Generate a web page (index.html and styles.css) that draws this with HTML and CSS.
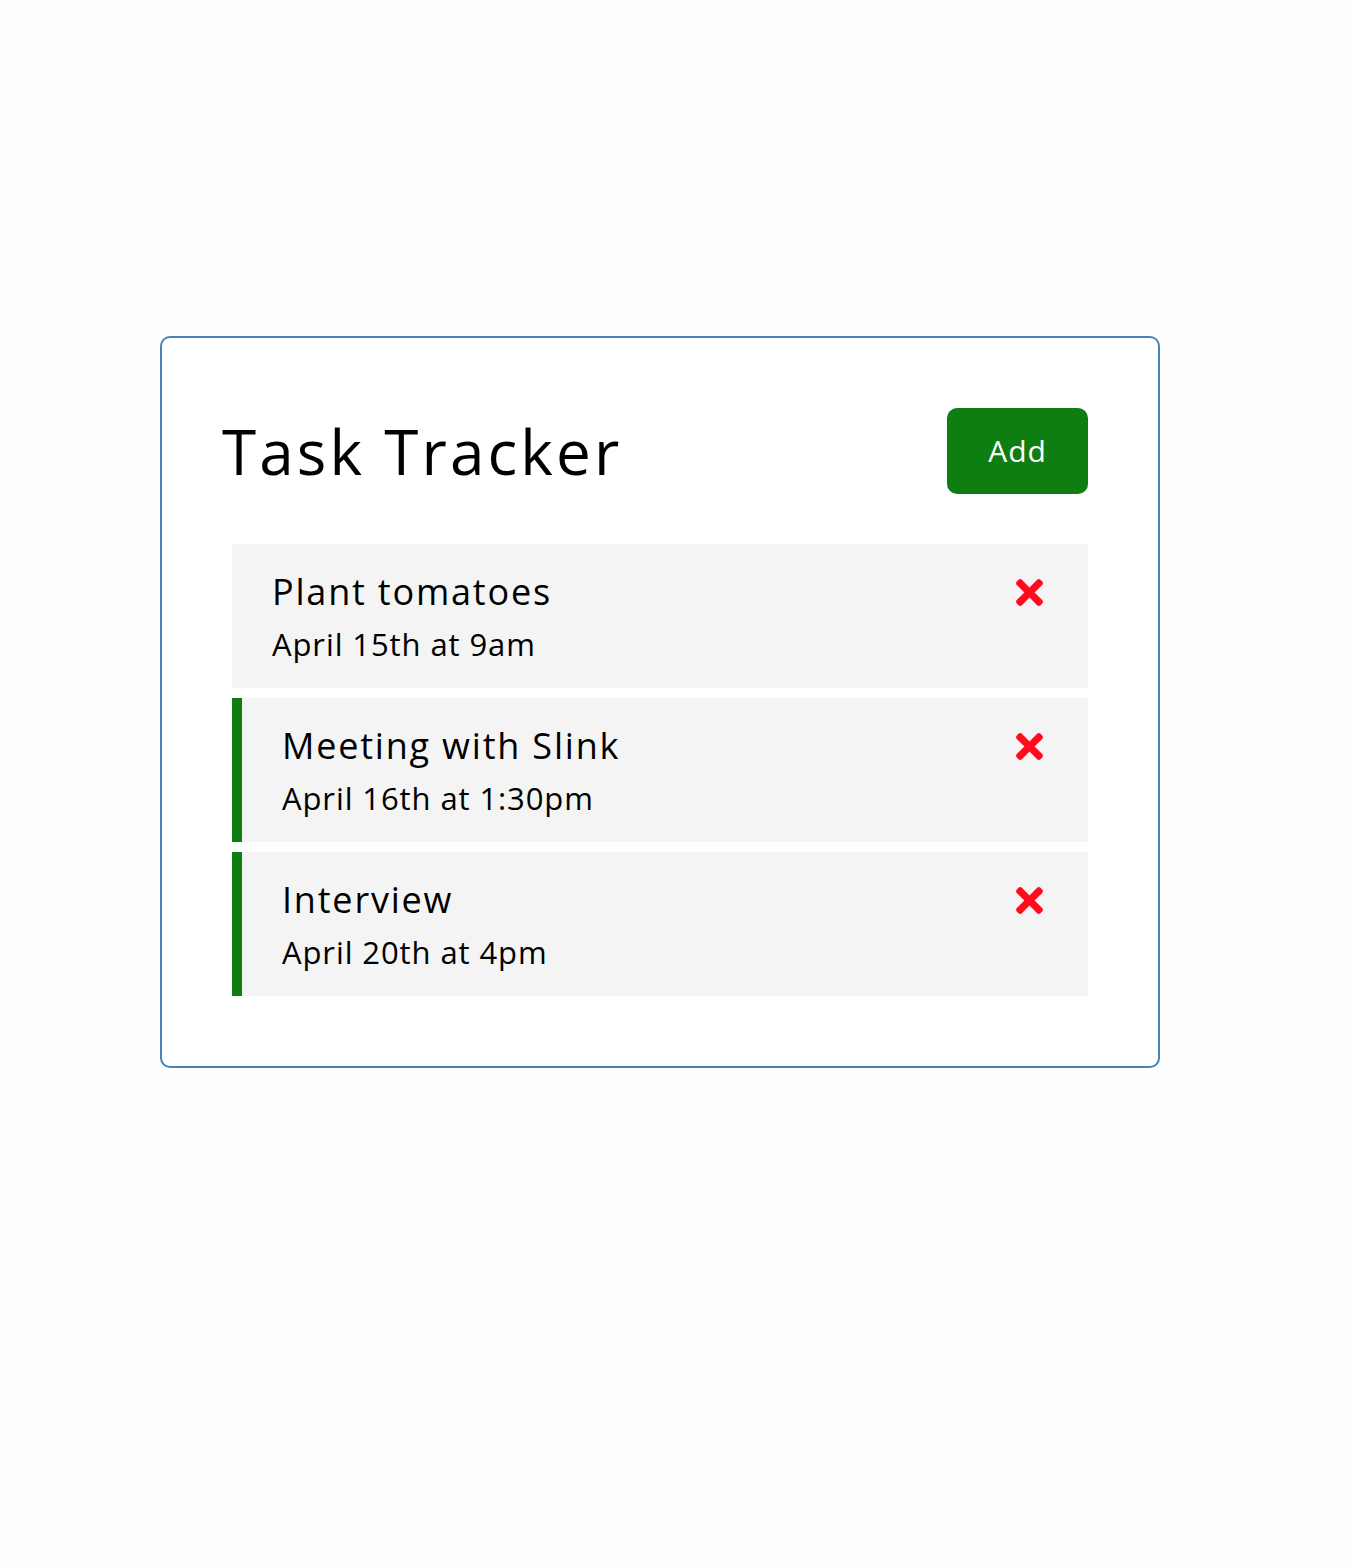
FILE: index.html
```html
<!DOCTYPE html>
<html lang="en">
<head>
<meta charset="utf-8">
<title>Task Tracker</title>
<link rel="stylesheet" href="styles.css">
</head>
<body>
<div class="container">
  <header class="header">
    <h1 class="title">Task Tracker</h1>
    <button class="btn">Add</button>
  </header>
  <div class="tasks">
    <div class="task">
      <h3 class="task-title">Plant tomatoes
        <svg class="del" viewBox="0 0 352 512" aria-hidden="true"><path d="M242.72 256l100.07-100.07c12.28-12.28 12.28-32.19 0-44.48l-22.24-22.24c-12.28-12.28-32.19-12.28-44.48 0L176 189.28 75.93 89.21c-12.28-12.28-32.19-12.28-44.48 0L9.21 111.45c-12.28 12.28-12.28 32.19 0 44.48L109.28 256 9.21 356.07c-12.28 12.28-12.28 32.19 0 44.48l22.24 22.24c12.28 12.28 32.2 12.28 44.48 0L176 322.72l100.07 100.07c12.28 12.28 32.2 12.28 44.48 0l22.24-22.24c12.28-12.28 12.28-32.19 0-44.48L242.72 256z"/></svg>
      </h3>
      <p class="task-day">April 15th at 9am</p>
    </div>
    <div class="task reminder">
      <h3 class="task-title">Meeting with Slink
        <svg class="del" viewBox="0 0 352 512" aria-hidden="true"><path d="M242.72 256l100.07-100.07c12.28-12.28 12.28-32.19 0-44.48l-22.24-22.24c-12.28-12.28-32.19-12.28-44.48 0L176 189.28 75.93 89.21c-12.28-12.28-32.19-12.28-44.48 0L9.21 111.45c-12.28 12.28-12.28 32.19 0 44.48L109.28 256 9.21 356.07c-12.28 12.28-12.28 32.19 0 44.48l22.24 22.24c12.28 12.28 32.2 12.28 44.48 0L176 322.72l100.07 100.07c12.28 12.28 32.2 12.28 44.48 0l22.24-22.24c12.28-12.28 12.28-32.19 0-44.48L242.72 256z"/></svg>
      </h3>
      <p class="task-day">April 16th at 1:30pm</p>
    </div>
    <div class="task reminder">
      <h3 class="task-title">Interview
        <svg class="del" viewBox="0 0 352 512" aria-hidden="true"><path d="M242.72 256l100.07-100.07c12.28-12.28 12.28-32.19 0-44.48l-22.24-22.24c-12.28-12.28-32.19-12.28-44.48 0L176 189.28 75.93 89.21c-12.28-12.28-32.19-12.28-44.48 0L9.21 111.45c-12.28 12.28-12.28 32.19 0 44.48L109.28 256 9.21 356.07c-12.28 12.28-12.28 32.19 0 44.48l22.24 22.24c12.28 12.28 32.2 12.28 44.48 0L176 322.72l100.07 100.07c12.28 12.28 32.2 12.28 44.48 0l22.24-22.24c12.28-12.28 12.28-32.19 0-44.48L242.72 256z"/></svg>
      </h3>
      <p class="task-day">April 20th at 4pm</p>
    </div>
  </div>
</div>
</body>
</html>
```

FILE: styles.css
```css
* {
  box-sizing: border-box;
  margin: 0;
  padding: 0;
}

body {
  font-family: "Open Sans", "Liberation Sans", sans-serif;
  background: #fefefe;
  color: #000;
}

.container {
  width: 1000px;
  min-height: 600px;
  margin: 336px 0 0 160px;
  border: 2px solid #4682b4;
  border-radius: 10px;
  padding: 60px;
  background: #fff;
}

.header {
  display: flex;
  justify-content: space-between;
  align-items: center;
  margin-bottom: 40px;
}

.title {
  font-size: 62px;
  font-weight: 400;
  line-height: 1.5;
  letter-spacing: 3.1px;
}

.btn {
  display: inline-block;
  background: #0f7e12;
  color: #fff;
  border: none;
  border-radius: 10px;
  margin: 10px;
  width: 141px;
  height: 86px;
  font-family: inherit;
  font-size: 30px;
  line-height: 46px;
  letter-spacing: 1px;
}

.task {
  background: #f4f4f4;
  margin: 10px;
  padding: 20px 40px;
}

.task.reminder {
  border-left: 10px solid #0f7e12;
}

.task-title {
  display: flex;
  align-items: center;
  justify-content: space-between;
  font-size: 36px;
  font-weight: 400;
  line-height: 56px;
  letter-spacing: 1.8px;
}

.task-day {
  font-size: 31px;
  line-height: 48px;
  letter-spacing: 0.9px;
}

.del {
  width: 27px;
  height: 39px;
  margin-right: 5px;
  fill: #ff0b1b;
  flex-shrink: 0;
}
```
